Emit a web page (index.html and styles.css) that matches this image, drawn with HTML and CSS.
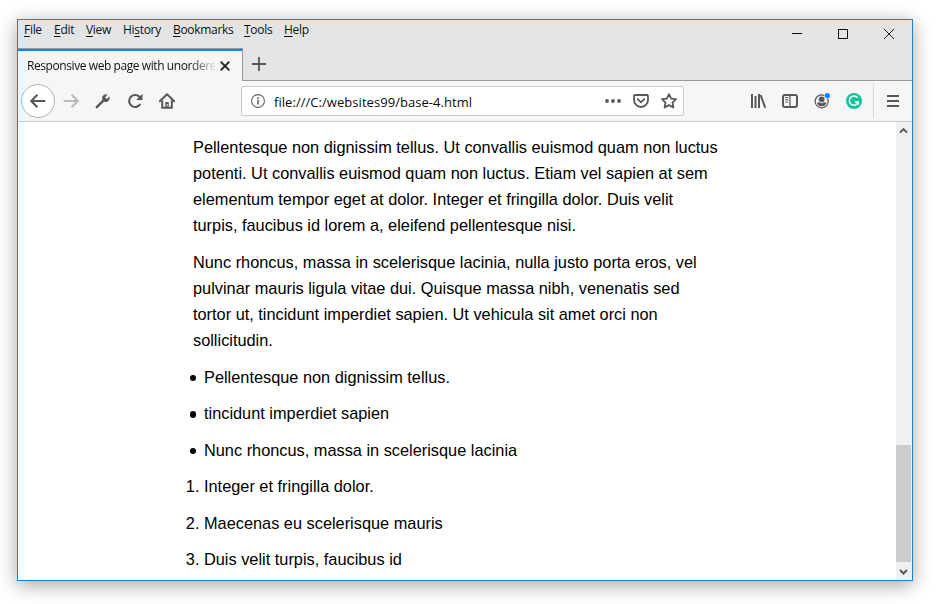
FILE: index.html
```html
<!DOCTYPE html>
<html lang="en">
<head>
<meta charset="utf-8">
<title>Responsive web page with unordered list</title>
<link rel="stylesheet" href="styles.css">
</head>
<body>
<div class="window">
  <header class="titlebar">
    <nav class="menu">
      <span><u>F</u>ile</span><span><u>E</u>dit</span><span><u>V</u>iew</span><span>Hi<u>s</u>tory</span><span><u>B</u>ookmarks</span><span><u>T</u>ools</span><span><u>H</u>elp</span>
    </nav>
    <div class="controls">
      <svg width="12" height="12" viewBox="0 0 12 12" shape-rendering="crispEdges"><path d="M1 5.5H11" stroke="#111"/></svg>
      <svg width="12" height="12" viewBox="0 0 12 12" shape-rendering="crispEdges"><rect x="1.5" y="1.5" width="9" height="9" fill="none" stroke="#111"/></svg>
      <svg width="12" height="12" viewBox="0 0 12 12"><path d="M1 1L11 11M11 1L1 11" stroke="#222"/></svg>
    </div>
  </header>
  <div class="tabs">
    <div class="tab">
      <span class="tab-title">Responsive web page with unordere</span>
      <svg width="12" height="12" viewBox="0 0 12 12"><path d="M1.7 1.7L10.3 10.3M10.3 1.7L1.7 10.3" stroke="#222" stroke-width="1.9"/></svg>
    </div>
    <div class="tab-rest">
      <svg width="14" height="14" viewBox="0 0 14 14"><path d="M7 0V14M0 7H14" stroke="#555" stroke-width="1.8"/></svg>
    </div>
  </div>
  <div class="toolbar">
    <span class="back"><svg class="ic" viewBox="0 0 16 16"><path d="M15.3 8H1.2M7.4 1.7L1.2 8L7.4 14.3" stroke-width="2"/></svg></span>
    <svg class="ic fwd" viewBox="0 0 16 16"><path d="M.6 8H14.6M8.6 1.7L14.8 8L8.6 14.3" stroke-width="2"/></svg>
    <svg class="ic wrench" viewBox="0 0 16 16"><path d="M1.8 14.2L8.8 7.2" stroke-width="2.4" stroke-linecap="round"/><path class="fill" d="M14.6 3.6L11.9 6.1L10 4.2L12.5 1.5C10.4.8 8 1.8 7.3 3.9C7 5 7.2 5.9 7.4 6.5L9.6 8.7C10.4 9 11.3 9 12.2 8.7C14.2 8 15.3 5.6 14.6 3.6Z"/></svg>
    <svg class="ic reload" viewBox="0 0 16 16"><path d="M12.9 4.4A6 6 0 1 0 13.3 11" stroke-width="2.1"/><path class="fill" d="M15.5.7V7.1H9.1Z"/></svg>
    <svg class="ic home" viewBox="0 0 16 16"><path d="M.8 8.3L8 1.2L15.2 8.3" stroke-width="2" stroke-linecap="round" stroke-linejoin="round"/><path d="M3.2 7.2V14.8H12.8V7.2" stroke-width="2"/><path class="fill" d="M6.3 15V9H9.7V15Z"/><path class="knob" d="M8.2 11V13"/></svg>
    <div class="urlbar">
      <svg class="info" width="14" height="14" viewBox="0 0 14 14"><circle cx="7" cy="7" r="6.4" fill="none" stroke="#666" stroke-width="1.1"/><path d="M7 6V10.5M7 3.2V4.9" stroke="#666" stroke-width="1.7"/></svg>
      <span class="url">file:///C:/websites99/base-4.html</span>
      <svg class="ic dots" viewBox="0 0 16 16"><circle class="fill" cx="2" cy="8" r="1.9"/><circle class="fill" cx="8" cy="8" r="1.9"/><circle class="fill" cx="14" cy="8" r="1.9"/></svg>
      <svg class="ic pocket" viewBox="0 0 16 16"><path d="M2 2H14Q15 2 15 3V7A7 7 0 0 1 1 7V3Q1 2 2 2Z" stroke-width="1.8"/><path d="M4.7 6.2L8 9.3L11.3 6.2" stroke-width="1.8" stroke-linecap="round"/></svg>
      <svg class="ic" viewBox="0 0 16 16"><path d="M8 1.2L10.2 5.6L15 6.2L11.5 9.6L12.4 14.5L8 12.1L3.6 14.5L4.5 9.6L1 6.2L5.8 5.6Z" stroke-width="1.8" stroke-linejoin="round"/></svg>
    </div>
    <div class="tools">
      <svg class="ic" viewBox="0 0 16 16"><path d="M2 1V15M5.5 3V15M9 1V15" stroke-width="2"/><path d="M10.6 2L15.2 14.7" stroke-width="2"/></svg>
      <svg class="ic" viewBox="0 0 16 16"><rect x="1" y="2" width="14" height="12" rx="2" stroke-width="2"/><path d="M8 2V14" stroke-width="1.2"/><path d="M3 4.6H6.4M3 6.8H6.4M3.8 9H6.4" stroke-width="1"/></svg>
      <svg class="ic" viewBox="0 0 16 16"><circle cx="7.7" cy="8.3" r="6.5" stroke-width="1.2"/><circle class="fill" cx="7.7" cy="6.3" r="2.9"/><path class="fill" d="M3 9.7Q5 9 6 9.6Q7.7 10.8 9.4 9.6Q10.5 9 12.5 9.7Q11.3 13.2 7.7 13.2Q4.1 13.2 3 9.7Z"/><circle class="halo" cx="13.4" cy="2.6" r="3.1"/><circle class="dot" cx="13.4" cy="2.6" r="2.6"/></svg>
      <svg class="ic" viewBox="0 0 16 16"><circle class="green" cx="8" cy="8" r="8"/><path class="g" d="M11.5 4.8A4.6 4.6 0 1 0 12.3 9H8.8M12.3 8.4V11.8" stroke-width="1.5"/></svg>
    </div>
    <div class="burger"><svg class="ic" viewBox="0 0 16 16"><path d="M2 3H14M2 8H14M2 13H14" stroke-width="2"/></svg></div>
  </div>
  <div class="view">
    <main>
      <p>Pellentesque non dignissim tellus. Ut convallis euismod quam non luctus<br>potenti. Ut convallis euismod quam non luctus. Etiam vel sapien at sem<br>elementum tempor eget at dolor. Integer et fringilla dolor. Duis velit<br>turpis, faucibus id lorem a, eleifend pellentesque nisi.</p>
      <p>Nunc rhoncus, massa in scelerisque lacinia, nulla justo porta eros, vel<br>pulvinar mauris ligula vitae dui. Quisque massa nibh, venenatis sed<br>tortor ut, tincidunt imperdiet sapien. Ut vehicula sit amet orci non<br>sollicitudin.</p>
      <ul>
        <li>Pellentesque non dignissim tellus.</li>
        <li>tincidunt imperdiet sapien</li>
        <li>Nunc rhoncus, massa in scelerisque lacinia</li>
      </ul>
      <ol>
        <li>Integer et fringilla dolor.</li>
        <li>Maecenas eu scelerisque mauris</li>
        <li>Duis velit turpis, faucibus id</li>
      </ol>
    </main>
    <div class="scroll">
      <svg width="15" height="17" viewBox="0 0 15 17"><path d="M4 10.6L7.5 7.1L11 10.6" fill="none" stroke="#555" stroke-width="2"/></svg>
      <div class="thumb"></div>
      <svg width="15" height="18" viewBox="0 0 15 18"><path d="M4 8L7.5 11.5L11 8" fill="none" stroke="#555" stroke-width="2"/></svg>
    </div>
  </div>
</div>
</body>
</html>
```
FILE: styles.css
```css
* { box-sizing: border-box; }
body { margin: 0; height: 604px; overflow: hidden; background: #fff; font-family: "Liberation Sans", Arial, sans-serif; }
svg { display: block; flex: none; }
.window {
  width: 896px; height: 562px; margin: 19px 0 0 17px;
  border: 1px solid #1883d7; background: #fff;
  display: flex; flex-direction: column;
  box-shadow: 0 4px 18px rgba(0,0,0,.36);
}
.titlebar { height: 28px; background: #e3e4e6; display: flex; justify-content: space-between; font: 12px/20px "Open Sans", "Noto Sans", sans-serif; color: #111; }
.menu { display: grid; grid-template-columns: 30px 32px 37px 50px 71px 40px 40px; padding-left: 6px; white-space: nowrap; letter-spacing: -.45px; }
.menu { letter-spacing: -.3px; }
.menu u { text-underline-offset: 2px; text-decoration-thickness: 1px; }
.controls { display: flex; gap: 34px; padding: 8px 17px 0 0; }
.tabs { height: 33px; display: flex; flex: none; }
.tab { width: 225px; background: #f5f6f7; border-top: 1px solid #9b9b9d; border-right: 1px solid #9b9b9d; box-shadow: inset 0 2px #0a84ff; display: flex; align-items: center; padding: 2px 11px 0 9px; justify-content: space-between; }
.tab-title { width: 188px; white-space: nowrap; font: 12px/18px "Open Sans", "Noto Sans", sans-serif; letter-spacing: -.42px; color: #111; -webkit-mask-image: linear-gradient(to right, #000 163px, transparent 190px); mask-image: linear-gradient(to right, #000 163px, transparent 190px); }
.tab-rest { flex: 1; background: #e3e4e6; border-bottom: 1px solid #9b9b9d; padding: 9px 0 0 9px; }
.toolbar { height: 41px; flex: none; background: #f5f6f7; border-bottom: 1px solid #c9cacc; display: flex; align-items: center; }
.ic { width: 16px; height: 16px; fill: none; stroke: #58585a; }
.ic .fill { fill: #58585a; stroke: none; }
.ic .dot { fill: #0a84ff; stroke: none; }
.ic .halo { fill: #f5f6f7; stroke: none; }
.ic .knob { stroke: #f5f6f7; }
.ic .green { fill: #15c39a; stroke: none; }
.ic .g { stroke: #fff; }
.back { width: 34px; height: 34px; margin-left: 3px; border: 1px solid #b1b1b3; border-radius: 50%; background: #fff; display: grid; place-items: center; }
.fwd { margin-left: 8px; stroke: #b8b9bb; }
.wrench { margin-left: 16px; }
.reload { margin-left: 16px; }
.home { margin-left: 16px; }
.urlbar { width: 443px; height: 30px; margin-left: 66px; padding: 0 6px 0 9px; background: #fff; border: 1px solid #c9cacc; border-radius: 2px; display: flex; align-items: center; }
.url { flex: 1; margin-left: 9px; padding-top: 2px; font: 13px/20px "Open Sans", "Noto Sans", sans-serif; letter-spacing: .05px; color: #0c0c0d; }
.dots, .pocket { margin-right: 12px; }
.tools { display: flex; gap: 16px; margin-left: 66px; }
.burger { height: 34px; margin-left: 11px; padding-left: 11px; border-left: 1px solid #d7d7db; display: flex; align-items: center; }
.view { flex: 1; min-height: 0; display: flex; justify-content: space-between; }
main { padding: 11.5px 0 0 175px; font-size: 16.33px; line-height: 26px; color: #000; white-space: nowrap; }
p { margin: 0 0 11px; }
ul, ol { margin: 0; padding-left: 11px; }
ul { list-style: none; }
ul li::before { content: ""; display: inline-block; width: 6.5px; height: 6.5px; margin: 0 8px 0 -14.5px; border-radius: 50%; background: #000; vertical-align: 1.5px; }
li { height: 26px; margin-bottom: 10.5px; }
.scroll { width: 16px; padding-right: 1px; background: #f0f0f0; display: flex; flex-direction: column; justify-content: space-between; }
.thumb { height: 117px; margin-top: auto; background: #cdcdcd; }
```
